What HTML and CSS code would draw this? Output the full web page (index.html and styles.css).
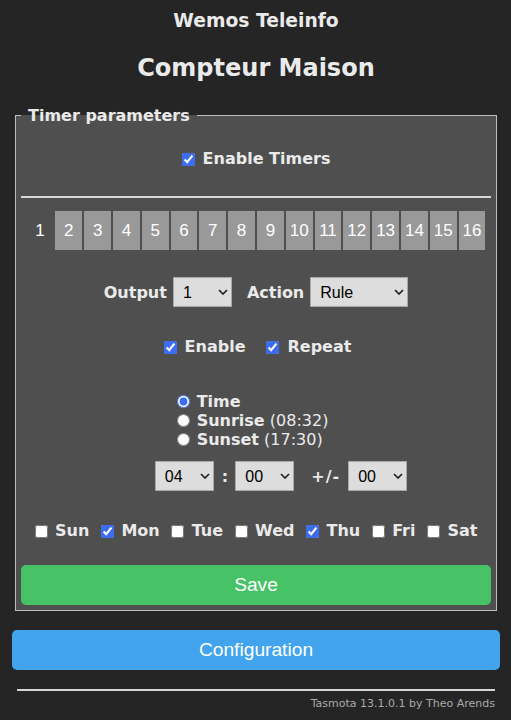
FILE: index.html
```html
<html>

    <head>
        <title>Wemos Teleinfo - Timers</title>
        <link rel="stylesheet" href="styles.css">
    </head>

    <body>
        <div class="page">
            <h3 class="device">Wemos Teleinfo</h3>
            <h2 class="name">Compteur Maison</h2>

            <fieldset class="timers">
                <legend>Timer parameters</legend>

                <div class="row enable-all">
                    <label class="check"><input type="checkbox" checked/><b>Enable Timers</b></label>
                </div>

                <hr class="line"/>

                <div class="tabs">
                    <button class="tab active">1</button>
                    <button class="tab">2</button>
                    <button class="tab">3</button>
                    <button class="tab">4</button>
                    <button class="tab">5</button>
                    <button class="tab">6</button>
                    <button class="tab">7</button>
                    <button class="tab">8</button>
                    <button class="tab">9</button>
                    <button class="tab">10</button>
                    <button class="tab">11</button>
                    <button class="tab">12</button>
                    <button class="tab">13</button>
                    <button class="tab">14</button>
                    <button class="tab">15</button>
                    <button class="tab">16</button>
                </div>

                <div class="row output-row">
                    <b>Output</b>
                    <select class="sel sel-out"><option>1</option></select>
                    <b class="action-label">Action</b>
                    <select class="sel sel-action"><option>Rule</option></select>
                </div>

                <div class="row flags">
                    <label class="check"><input type="checkbox" checked/><b>Enable</b></label>
                    <label class="check"><input type="checkbox" checked/><b>Repeat</b></label>
                </div>

                <div class="modes">
                    <div class="mode-list">
                        <label class="radio"><input type="radio" name="mode" checked/><b>Time</b></label>
                        <label class="radio"><input type="radio" name="mode"/><span><b>Sunrise</b> (08:32)</span></label>
                        <label class="radio"><input type="radio" name="mode"/><span><b>Sunset</b> (17:30)</span></label>
                    </div>
                </div>

                <div class="row time-row">
                    <select class="sel sel-time"><option>04</option></select>
                    <b class="colon">:</b>
                    <select class="sel sel-time"><option>00</option></select>
                    <b class="plusminus">+/-</b>
                    <select class="sel sel-time"><option>00</option></select>
                </div>

                <div class="row days">
                    <label class="check"><input type="checkbox"/><b>Sun</b></label>
                    <label class="check"><input type="checkbox" checked/><b>Mon</b></label>
                    <label class="check"><input type="checkbox"/><b>Tue</b></label>
                    <label class="check"><input type="checkbox"/><b>Wed</b></label>
                    <label class="check"><input type="checkbox" checked/><b>Thu</b></label>
                    <label class="check"><input type="checkbox"/><b>Fri</b></label>
                    <label class="check"><input type="checkbox"/><b>Sat</b></label>
                </div>

                <button class="btn save">Save</button>
            </fieldset>

            <button class="btn config">Configuration</button>

            <div class="footer">
                <hr class="line"/>
                <div class="version">Tasmota 13.1.0.1 by Theo Arends</div>
            </div>
        </div>
    </body>

</html>
```

FILE: styles.css
```css
body {
    margin: 0;
    padding: 0;
    background-color: #252525;
    color: #eaeaea;
    font-family: "DejaVu Sans", Verdana, sans-serif;
    font-size: 16px;
}

.page {
    margin: 0 11px 0 12px;
    text-align: center;
}

.device {
    margin: 10px 0 0 0;
    font-size: 18.72px;
    line-height: 22px;
}

.name {
    margin: 22px 0 0 0;
    font-size: 24px;
    line-height: 28px;
}

.timers {
    margin: 24px 3px 0 3px;
    padding: 0 5px 5px 5px;
    border: 1px solid #bdbdbd;
    background-color: #4f4f4f;
}

.timers legend {
    padding: 0 7px;
    font-weight: bold;
    line-height: 19px;
    text-align: left;
}

.row {
    display: flex;
    justify-content: center;
    align-items: center;
}

.check, .radio {
    display: flex;
    align-items: center;
    gap: 8px;
    line-height: 20px;
}

.check input, .radio input {
    margin: 0;
    width: 13px;
    height: 13px;
    accent-color: #3c6df0;
}

.enable-all {
    margin-top: 24px;
}

.line {
    margin: 0;
    height: 0;
    border: 0;
    border-top: 2px solid #d6d6d6;
}

.timers .line {
    margin-top: 27px;
}

.tabs {
    display: flex;
    justify-content: center;
    gap: 2px;
    margin-top: 13px;
}

.tab {
    width: 26.8px;
    height: 39px;
    padding: 0;
    border: 0;
    background-color: #999;
    color: #fff;
    font-family: "Liberation Sans", Arial, sans-serif;
    font-size: 17px;
}

.tab.active {
    background-color: transparent;
}

.output-row {
    margin-top: 27px;
    gap: 6px;
}

.output-row .action-label {
    margin-left: 9px;
}

.sel {
    appearance: none;
    -webkit-appearance: none;
    height: 30px;
    padding: 0 0 0 9px;
    border: 1px solid #a8a8a8;
    border-radius: 0;
    background-color: #dddddd;
    background-image: url("data:image/svg+xml,%3Csvg xmlns='http://www.w3.org/2000/svg' width='10' height='6'%3E%3Cpath d='M1 1l4 4 4-4' fill='none' stroke='%23222' stroke-width='1.7'/%3E%3C/svg%3E");
    background-repeat: no-repeat;
    background-position: right 3px center;
    color: #000;
    font-family: "Liberation Sans", Arial, sans-serif;
    font-size: 16px;
    text-align: left;
}

.sel-out, .sel-time {
    width: 59px;
}

.sel-action {
    width: 98px;
}

.flags {
    margin-top: 30px;
    padding-left: 3px;
    gap: 21px;
}

.modes {
    margin-top: 35px;
}

.mode-list {
    display: inline-block;
    margin-right: 7px;
    text-align: left;
}

.radio {
    gap: 7px;
    line-height: 19px;
}

.time-row {
    margin-top: 12px;
    padding-left: 50px;
}

.time-row .colon {
    margin: 0 7px 0 8px;
}

.time-row .plusminus {
    margin: 0 8px 0 17px;
    letter-spacing: 1px;
}

.days {
    margin-top: 30px;
    gap: 11.5px;
}

.days .check {
    gap: 7.5px;
}

.btn {
    display: block;
    width: 100%;
    height: 40px;
    border: 0;
    border-radius: 5px;
    color: #fff;
    font-family: "Liberation Sans", Arial, sans-serif;
    font-size: 19.2px;
}

.save {
    margin-top: 24px;
    background-color: #47c266;
}

.config {
    margin-top: 19px;
    background-color: #41a4ec;
}

.footer {
    padding: 0 5px;
    text-align: right;
}

.footer .line {
    margin-top: 19px;
}

.version {
    margin-top: 6px;
    font-size: 11px;
    line-height: 14px;
    color: #aaa;
}
```
